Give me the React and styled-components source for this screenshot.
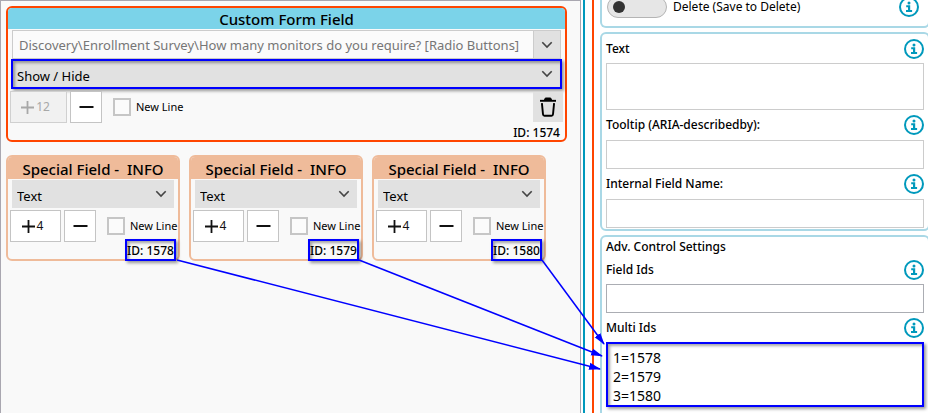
import React from "react";
import styled, { createGlobalStyle, css } from "styled-components";

const blue = "#0000ff";
const teal = "#0099bc";

const GlobalStyle = createGlobalStyle`
  *, *::before, *::after { box-sizing: border-box; }
  body { margin: 0; background: #fff; color: #000; }
  body, button, input, select, textarea {
    font-family: "Noto Sans", "Open Sans", sans-serif;
    font-size: 12px;
    line-height: 16px;
  }
`;

const callout = css`
  border: 2px solid ${blue};
  box-shadow: 2px 2px 3px rgba(0, 0, 0, 0.4), inset 2px 2px 3px rgba(0, 0, 0, 0.35);
`;

const Screen = styled.div`
  position: relative;
  display: grid;
  grid-template-columns: minmax(0, 583fr) minmax(0, 345fr);
  height: 100vh;
  overflow: hidden;
`;

const Designer = styled.main`
  display: flex;
  flex-direction: column;
  gap: 13px;
  margin-right: 2px;
  padding: 5px 13px 0 5px;
  background: #f9f9f9;
  border: solid #a9a7b0;
  border-width: 1px 1px 0 1px;
`;

const FieldCard = styled.section`
  min-width: 0;
  display: flex;
  flex-direction: column;
  border: 2px solid ${(p) => p.$edge};
  border-radius: 6px;
  background: #f9f9f9;
`;

const CardTitle = styled.h2`
  margin: 0;
  height: ${(p) => (p.$small ? 22 : 21)}px;
  padding-top: 1px;
  border-radius: 4px 4px 0 0;
  background: ${(p) => p.$fill};
  font-size: 15px;
  font-weight: 500;
  line-height: ${(p) => (p.$small ? 22 : 20)}px;
  text-align: center;
  white-space: pre;
`;

const PathBox = styled.div`
  display: flex;
  height: 29px;
  margin: 1px 4px 0;
  border: 1px solid #cccccc;
  background: #fff;
`;

const PathInput = styled.input`
  flex: 1;
  min-width: 0;
  padding: 0 6px;
  border: 0;
  background: #fbfbfb;
  color: #767676;
  font-size: 13px;
`;

const DropButton = styled.button`
  display: grid;
  place-items: center;
  width: 27px;
  padding: 0;
  border: 0;
  border-left: 1px solid #cccccc;
  background: #e1e1e1;
`;

const SelectWrap = styled.div`
  display: grid;
  grid-template-columns: minmax(0, 1fr) 26px;
  align-items: center;
  height: ${(p) => (p.$marked ? 30 : 28)}px;
  margin: ${(p) => (p.$marked ? "0 3px" : "1px 4px 0")};
  background: #e1e1e1;
  ${(p) => p.$marked && callout}

  select {
    grid-area: 1 / 1 / 2 / 3;
    height: 100%;
    padding: ${(p) => (p.$marked ? "4px 4px 0" : "4px 5px 0")};
    border: 0;
    appearance: none;
    background: transparent;
    color: #000;
    font-size: 13px;
  }
  svg { grid-area: 1 / 2; justify-self: center; pointer-events: none; }
`;

const Controls = styled.div`
  display: flex;
  align-items: center;
  gap: 3px;
  height: 32px;
  margin: 2px 0 0 2px;
  padding-right: ${(p) => (p.$wide ? 2 : 0)}px;
`;

const StepButton = styled.button`
  flex: none;
  display: flex;
  align-items: center;
  justify-content: center;
  gap: 2px;
  width: ${(p) => p.$w}px;
  height: 32px;
  padding: 0 6px 0 0;
  border: 1px solid #c4c4c4;
  background: #fff;
  color: #111;
  ${(p) => p.$bare && "padding: 0;"}
  &:disabled { background: #f1f1f1; color: #a8a8a8; border-color: #d0d0d0; }
`;

const CheckLabel = styled.label`
  display: flex;
  align-items: center;
  gap: 5px;
  min-width: 0;
  margin-left: 8px;
  white-space: nowrap;
  flex: 1;
  font-size: 11px;
  line-height: 18px;

  input {
    flex: none;
    appearance: none;
    width: 18px;
    height: 18px;
    margin: 0;
    border: 2px solid #c6c6c6;
    background: #fbfbfb;
  }
`;

const TrashButton = styled.button`
  display: grid;
  place-items: center;
  width: 30px;
  height: 30px;
  padding: 0;
  border: 0;
  background: #e1e1e1;
`;

const IdLine = styled.div`
  align-self: flex-end;
  margin-right: 5px;
  height: 17px;
  line-height: 19px;
  font-weight: 500;
`;

const IdTag = styled.div`
  align-self: flex-end;
  display: grid;
  place-items: center;
  width: 51px;
  height: 22px;
  margin: -3px 2px -2px 0;
  padding-top: 2px;
  background: #f9f9f9;
  font-weight: 500;
  white-space: nowrap;
  z-index: 1;
  ${callout}
`;

const InfoCards = styled.div`
  display: grid;
  grid-template-columns: repeat(3, minmax(0, 174px));
  gap: 9px;
`;

const Settings = styled.aside`
  display: flex;
  border-left: 2px solid ${teal};
  background: #fff;
`;

const SettingsBody = styled.div`
  flex: 1;
  min-width: 0;
  display: flex;
  flex-direction: column;
  gap: 4px;
  margin-left: 7px;
  padding-left: 6px;
  border-left: 2px solid #ff4500;
`;

const Group = styled.section`
  flex: none;
  display: flex;
  flex-direction: column;
  margin-right: -2px;
  padding: 0 4px ${(p) => (p.$last ? 12 : 1)}px;
  border: 2px solid #a9d8e6;
  border-radius: 6px;
  ${(p) => p.$scrolled && "border-top: 0; border-radius: 0 0 6px 6px;"}
`;

const ToggleRow = styled.div`
  display: flex;
  align-items: center;
  height: 22px;
  margin: -4px 5px 7px 1px;
`;

const ToggleLabel = styled.label`
  flex: 1;
  display: flex;
  align-items: center;
  gap: 6px;
  line-height: 18px;

  input {
    appearance: none;
    display: flex;
    align-items: center;
    width: 60px;
    height: 22px;
    margin: 0;
    padding: 0 5px;
    border: 1px solid #b4b4b4;
    border-radius: 11px;
    background: #e6e6e6;
  }
  input::before {
    content: "";
    width: 12px;
    height: 12px;
    border-radius: 50%;
    background: #333;
  }
`;

const GroupTitle = styled.h3`
  margin: 2px 0 0;
  font-size: 12px;
  font-weight: 500;
  line-height: 16px;
`;

const LabelRow = styled.div`
  display: flex;
  align-items: center;
  justify-content: space-between;
  height: ${(p) => (p.$tall ? 30 : 29)}px;
  font-weight: 500;
`;

const HelpButton = styled.button`
  display: flex;
  padding: 0;
  border: 0;
  background: none;
`;

const TextInput = styled.input`
  width: 100%;
  height: 29px;
  border: 1px solid ${(p) => (p.$dark ? "#abadb3" : "#cccccc")};
  background: #fff;
`;

const TextBlock = styled.textarea`
  display: block;
  width: 100%;
  height: ${(p) => (p.$marked ? 65 : 47)}px;
  padding: 4px 5px;
  border: 1px solid #cccccc;
  border-radius: 0;
  background: #fff;
  font-size: 14px;
  line-height: 19px;
  resize: none;
  overflow: hidden;
  ${(p) => p.$marked && callout}
`;

const Arrows = styled.svg`
  position: absolute;
  left: 0;
  top: 0;
  pointer-events: none;
  z-index: 2;
`;

const Chevron = () => (
  <svg width="12" height="8" viewBox="0 0 12 8" fill="none" stroke="#444" strokeWidth="1.6">
    <path d="M1.3 1.2 6 6l4.700-4.800" />
  </svg>
);

const Plus = () => (
  <svg width="13" height="13" viewBox="0 0 13 13" stroke="currentColor" strokeWidth="1.8">
    <path d="M0 6.500h13M6.500 0v13" />
  </svg>
);

const Minus = () => (
  <svg width="15" height="4" viewBox="0 0 15 4" stroke="currentColor" strokeWidth="2">
    <path d="M0.500 2h14" />
  </svg>
);

const Trash = () => (
  <svg width="18" height="20" viewBox="0 0 18 20" fill="none" stroke="#000" strokeWidth="1.900">
    <path d="M1 3.800h16" />
    <path d="M5.500 3 6.300 1h5.400l.8 2z" fill="#000" strokeWidth="1" />
    <path d="M2.900 6.200 4 17.300q.1 1.500 1.500 1.500h7q1.400 0 1.500-1.500L15.100 6.200" />
  </svg>
);

const Help = ({ topic }) => (
  <HelpButton type="button" aria-label={`Help: ${topic}`}>
    <svg width="20" height="20" viewBox="0 0 20 20">
      <circle cx="10" cy="10" r="9" fill="#fff" stroke={teal} strokeWidth="2" />
      <circle cx="10" cy="5.900" r="1.500" fill={teal} />
      <path d="M7.200 8.200h4v4.900h1.900v2H7v-2h2v-2.900H7.200z" fill={teal} />
    </svg>
  </HelpButton>
);

const Stepper = ({ value, width, disabled }) => (
  <>
    <StepButton type="button" $w={width} disabled={disabled} aria-label={`Widen, ${value}`}>
      <Plus />
      {value}
    </StepButton>
    <StepButton type="button" $w={32} $bare aria-label="Narrow">
      <Minus />
    </StepButton>
  </>
);

const NewLine = () => (
  <CheckLabel>
    <input type="checkbox" />
    New Line
  </CheckLabel>
);

const Dropdown = ({ label, value, marked }) => (
  <SelectWrap $marked={marked}>
    <select aria-label={label} defaultValue={value}>
      <option>{value}</option>
    </select>
    <Chevron />
  </SelectWrap>
);

const InfoCard = ({ id }) => (
  <FieldCard $edge="#efbb9a">
    <CardTitle $fill="#efbb9a" $small>{"Special Field -  INFO"}</CardTitle>
    <Dropdown label="Field type" value="Text" />
    <Controls>
      <Stepper value={4} width={51} />
      <NewLine />
    </Controls>
    <IdTag>ID: {id}</IdTag>
  </FieldCard>
);

const FieldLabel = ({ htmlFor, tall, children }) => (
  <LabelRow $tall={tall}>
    <label htmlFor={htmlFor}>{children}</label>
    <Help topic={children} />
  </LabelRow>
);

const arrows = [
  { from: [177, 260], to: [600, 369] },
  { from: [359, 260], to: [602, 356] },
  { from: [542, 260], to: [604, 344] },
];

export default function App() {
  return (
    <Screen>
      <GlobalStyle />
      <Designer>
        <FieldCard $edge="#ff4500">
          <CardTitle $fill="#7bd3e9">Custom Form Field</CardTitle>
          <PathBox>
            <PathInput
              aria-label="Form field"
              defaultValue="Discovery\Enrollment Survey\How many monitors do you require? [Radio Buttons]"
            />
            <DropButton type="button" aria-label="Choose form field">
              <Chevron />
            </DropButton>
          </PathBox>
          <Dropdown label="Behaviour" value="Show / Hide" marked />
          <Controls $wide>
            <Stepper value={12} width={57} disabled />
            <NewLine />
            <TrashButton type="button" aria-label="Delete field">
              <Trash />
            </TrashButton>
          </Controls>
          <IdLine>ID: 1574</IdLine>
        </FieldCard>
        <InfoCards>
          {[1578, 1579, 1580].map((id) => (
            <InfoCard key={id} id={id} />
          ))}
        </InfoCards>
      </Designer>
      <Settings>
        <SettingsBody>
          <Group $scrolled>
            <ToggleRow>
              <ToggleLabel>
                <input type="checkbox" role="switch" />
                Delete (Save to Delete)
              </ToggleLabel>
              <Help topic="Delete" />
            </ToggleRow>
          </Group>
          <Group>
            <FieldLabel htmlFor="text">Text</FieldLabel>
            <TextBlock id="text" />
            <FieldLabel htmlFor="tooltip" tall>Tooltip (ARIA-describedby):</FieldLabel>
            <TextInput id="tooltip" />
            <FieldLabel htmlFor="internal-name" tall>Internal Field Name:</FieldLabel>
            <TextInput id="internal-name" />
          </Group>
          <Group $last>
            <GroupTitle>Adv. Control Settings</GroupTitle>
            <FieldLabel htmlFor="field-ids">Field Ids</FieldLabel>
            <TextInput id="field-ids" $dark />
            <FieldLabel htmlFor="multi-ids">Multi Ids</FieldLabel>
            <TextBlock id="multi-ids" $marked defaultValue={"1=1578\n2=1579\n3=1580"} />
          </Group>
        </SettingsBody>
      </Settings>
      <Arrows width="928" height="413" aria-hidden="true">
        <defs>
          <marker id="head" markerUnits="userSpaceOnUse" markerWidth="12" markerHeight="8" refX="11" refY="4" orient="auto">
            <path d="M0 0.500 12 4 0 7.500z" fill={blue} />
          </marker>
        </defs>
        {arrows.map(({ from, to }) => (
          <line
            key={from[0]}
            x1={from[0]}
            y1={from[1]}
            x2={to[0]}
            y2={to[1]}
            stroke={blue}
            strokeWidth="1.500"
            markerEnd="url(#head)"
          />
        ))}
      </Arrows>
    </Screen>
  );
}
